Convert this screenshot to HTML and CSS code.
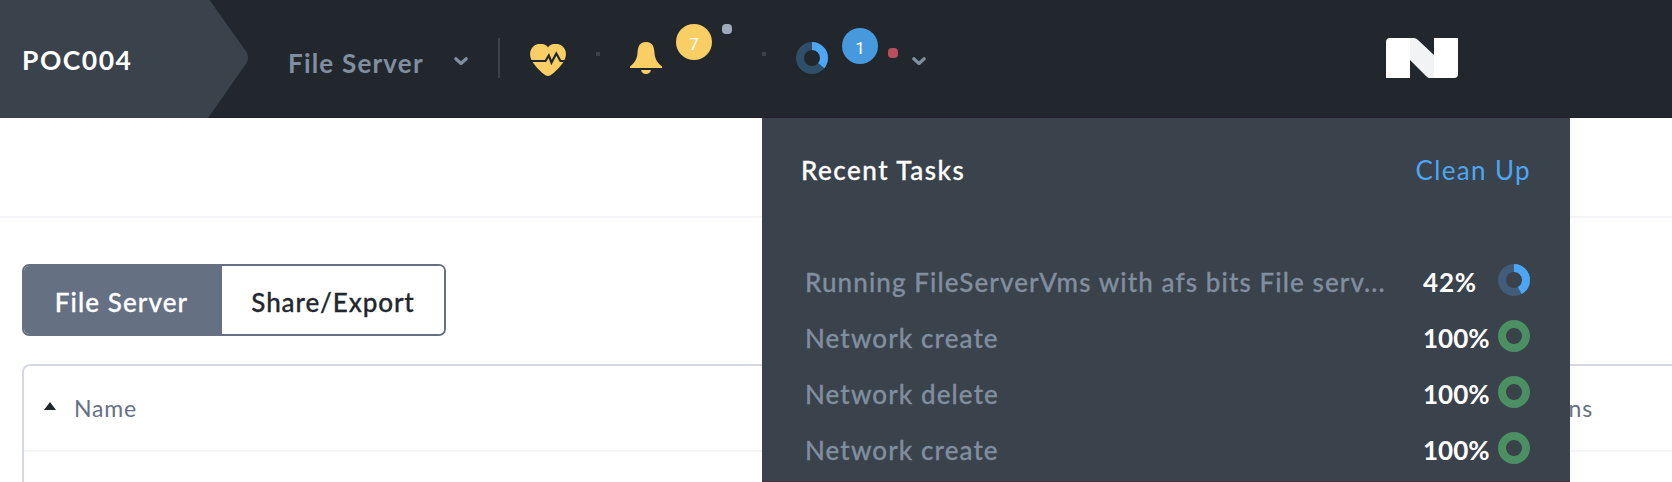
FILE: index.html
```html
<!DOCTYPE html>
<html lang="en">
<head>
<meta charset="utf-8">
<title>File Server</title>
<link rel="stylesheet" href="styles.css">
</head>
<body>
<header class="topbar">
  <div class="cluster">
    <svg class="cluster-shape" width="250" height="118" viewBox="0 0 250 118"><path d="M0 0H209.500L246.500 52Q249.500 57.500 246.500 63L208 118H0Z" fill="#3a424b"/></svg>
    <span class="cluster-name">POC004</span>
  </div>
  <nav class="nav">
    <span class="nav-label">File Server</span>
    <svg class="chevron nav-chevron" width="16" height="10" viewBox="0 0 16 10"><path d="M2.800 2.800L8 7.400L13.200 2.800"/></svg>
  </nav>
  <span class="separator"></span>
  <svg class="heart" width="36" height="33" viewBox="0 0 36 33"><path fill="#f9cf65" d="M18 3.500C20-1 30-2 34 4C38 10 35 16 32 20C29 24 24 29 20.500 31.300Q18 32.700 15.500 31.300C12 29 7 24 4 20C1 16-2 10 2 4C6-2 16-1 18 3.500Z"/><path d="M0 17H15.500L18.800 11.500L21.500 18.500L26.300 9.500L30.500 17H36" fill="none" stroke="#22272e" stroke-width="2.200"/></svg>
  <span class="dot dot-a"></span>
  <svg class="bell" width="32" height="32" viewBox="0 0 32 32"><path fill="#f9cf65" d="M0 26V24.500C5 20.500 7 17 7.500 11C8 5 9 0 16 0S24 5 24.500 11C25 17 27 20.500 32 24.500V26ZM11 28H21Q20 32 16 32T11 28Z"/></svg>
  <span class="badge badge-alert">7</span>
  <span class="status status-gray"></span>
  <span class="dot dot-b"></span>
  <svg class="task-ring" width="32" height="32" viewBox="0 0 32 32"><circle class="ring" cx="16" cy="16" r="12" stroke="#2f4e68"/><circle class="ring" cx="16" cy="16" r="12" stroke="#4da6f5" pathLength="100" stroke-dasharray="36 64" transform="rotate(-90 16 16)"/></svg>
  <span class="badge badge-task">1</span>
  <span class="status status-red"></span>
  <svg class="chevron task-chevron" width="16" height="10" viewBox="0 0 16 10"><path d="M2.800 2.800L8 7.400L13.200 2.800"/></svg>
  <svg class="logo" width="72" height="40" viewBox="0 0 72 40"><path fill="#f2f3f5" d="M23 0H28Q30 0 32 2L48 17V40H43Q42 40 40 38L23 21Z"/><path fill="#fff" d="M4 0H24V40H0V4Q0 0 4 0ZM48 0H72V36Q72 40 68 40H48Z"/></svg>
</header>
<main class="content">
  <div class="toolbar"></div>
  <div class="tabs">
    <button class="tab tab-active">File Server</button>
    <button class="tab tab-share">Share/Export</button>
  </div>
  <div class="table">
    <div class="table-head">
      <svg class="sort" width="12" height="8" viewBox="0 0 12 8"><path d="M6 0L12 8H0Z" fill="#22272e"/></svg>
      <span class="column">Name</span>
      <span class="column column-last">ns</span>
    </div>
  </div>
</main>
<section class="panel">
  <div class="panel-head"><span class="panel-title">Recent Tasks</span><a class="cleanup">Clean Up</a></div>
  <div class="task"><span class="task-name">Running FileServerVms with afs bits File serv...</span><span class="percent percent-running">42%</span>
    <svg width="32" height="32" viewBox="0 0 32 32"><circle class="ring" cx="16" cy="16" r="12" stroke="#415d7a"/><circle class="ring" cx="16" cy="16" r="12" stroke="#4da6f5" pathLength="100" stroke-dasharray="42 58" transform="rotate(-90 16 16)"/></svg></div>
  <div class="task"><span class="task-name">Network create</span><span class="percent">100%</span>
    <svg width="32" height="32" viewBox="0 0 32 32"><circle class="ring" cx="16" cy="16" r="12" stroke="#4b9062"/></svg></div>
  <div class="task"><span class="task-name">Network delete</span><span class="percent">100%</span>
    <svg width="32" height="32" viewBox="0 0 32 32"><circle class="ring" cx="16" cy="16" r="12" stroke="#4b9062"/></svg></div>
  <div class="task task-final"><span class="task-name">Network create</span><span class="percent">100%</span>
    <svg width="32" height="32" viewBox="0 0 32 32"><circle class="ring" cx="16" cy="16" r="12" stroke="#4b9062"/></svg></div>
</section>
</body>
</html>
```
FILE: styles.css
```css
* { box-sizing: border-box; }
body { margin: 0; width: 1672px; height: 482px; overflow: hidden; position: relative; background: #fff; font: 500 26px/32px Lato, "Open Sans", sans-serif; color: #22272e; white-space: nowrap; }
svg { display: block; flex: none; }
.topbar { display: flex; align-items: flex-start; height: 118px; background: #22272e; border-bottom: 1px solid #251c2b; }
.topbar > * { flex: none; }
.cluster { width: 250px; height: 118px; position: relative; padding: 44px 0 0 22px; }
.cluster-shape { position: absolute; left: 0; top: 0; }
.cluster-name { position: relative; color: #fff; font-size: 26.5px; font-weight: 700; letter-spacing: 1.5px; }
.nav { display: flex; width: 248px; padding-left: 38px; color: #808e9f; font-weight: 700; }
.nav-label { width: 165px; margin-top: 47px; letter-spacing: 1.2px; }
.nav-chevron { margin-top: 56px; }
.chevron path { fill: none; stroke: #808e9f; stroke-width: 3.3; stroke-linecap: round; stroke-linejoin: round; }
.separator { width: 2px; height: 40px; margin-top: 38px; background: #3a424b; }
.heart { margin: 44px 0 0 30px; }
.dot { width: 4px; height: 4px; margin-top: 52px; background: #3a424b; }
.dot-a { margin-left: 30px; }
.bell { margin: 42px 0 0 30px; }
.badge { width: 36px; height: 36px; border-radius: 50%; color: #fff; font: 400 17px/40px Roboto, sans-serif; text-align: center; }
.badge-alert { margin: 24px 0 0 14px; background: #f9cf65; }
.badge-task { margin: 28px 0 0 14px; background: #4799dd; }
.status { width: 10px; height: 10px; border-radius: 4px; }
.status-gray { margin: 24px 0 0 10px; background: #a0a9ba; }
.dot-b { margin-left: 30px; }
.task-ring { margin: 42px 0 0 30px; }
.ring { fill: none; stroke-width: 8; }
.status-red { margin: 48px 0 0 10px; background: #b94f5d; }
.task-chevron { margin: 56px 0 0 13px; }
.logo { margin: 38px 0 0 459px; }
.content { height: 364px; overflow: hidden; }
.toolbar { height: 100px; border-bottom: 2px solid #f2f4f6; }
.tabs { display: flex; width: 424px; height: 72px; margin: 46px 0 0 22px; border: 2px solid #657183; border-radius: 7px; overflow: hidden; }
.tab { border: 0; padding: 4px 0 0; background: #fff; color: #22272e; font: inherit; -webkit-text-stroke: 0.3px currentColor; }
.tab-active { width: 198px; padding-right: 3px; background: #657183; color: #fff; letter-spacing: 1.1px; }
.tab-share { flex: 1; letter-spacing: 0.9px; }
.table { width: 1700px; height: 118px; margin: 28px 0 0 22px; border: 2px solid #d5d9df; border-bottom: 0; border-radius: 8px 8px 0 0; }
.table-head { display: flex; align-items: center; height: 86px; padding-left: 20px; border-bottom: 2px solid #f2f4f6; color: #657183; font-size: 23px; font-weight: 400; letter-spacing: 0.8px; }
.sort { margin-top: -4px; }
.column { margin-left: 18px; }
.column-last { margin-left: auto; padding-right: 127px; }
.panel { position: absolute; left: 762px; top: 118px; width: 808px; height: 364px; padding: 0 39px; background: #3a424b; border-bottom: 1px solid #3e3241; overflow: hidden; }
.panel-head { display: flex; justify-content: space-between; height: 140px; padding-top: 36px; color: #fff; }
.panel-title { letter-spacing: 1.5px; -webkit-text-stroke: 0.3px currentColor; }
.cleanup { color: #4da6f5; font-weight: 400; letter-spacing: 1.35px; }
.task { display: flex; height: 56px; padding: 6px 0 0 4px; color: #808e9f; }
.task-final { height: 50px; }
.task-name { width: 618px; padding-top: 2px; letter-spacing: 1.1px; -webkit-text-stroke: 0.3px currentColor; }
.percent { width: 75px; padding-top: 2px; color: #fff; font-weight: 700; }
.percent-running { letter-spacing: 0.8px; }
```
